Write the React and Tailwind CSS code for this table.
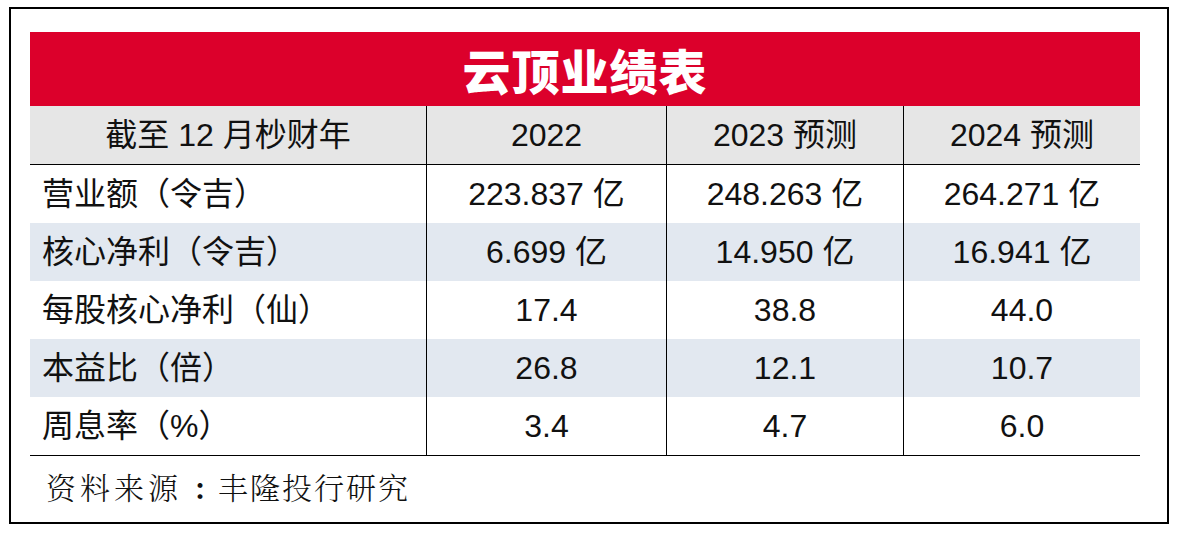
import React from "react";

const rows = [
  ["营业额（令吉）", "223.837 亿", "248.263 亿", "264.271 亿"],
  ["核心净利（令吉）", "6.699 亿", "14.950 亿", "16.941 亿"],
  ["每股核心净利（仙）", "17.4", "38.8", "44.0"],
  ["本益比（倍）", "26.8", "12.1", "10.7"],
  ["周息率（%）", "3.4", "4.7", "6.0"],
];

const font = { fontFamily: '"Liberation Sans", "Noto Sans CJK SC", sans-serif' };

export default function App() {
  return (
    <div className="w-[1178px] h-[535px] bg-white pt-[7px] pl-[9px]" style={font}>
      <div className="w-[1160px] h-[517px] border-2 border-black pl-[19px] pt-[23px] flex flex-col">
        <div className="w-[1110px] flex flex-col">
          <div className="h-[74px] bg-[#dc002b] flex items-center justify-center">
            <span
              className="text-white text-[48px] font-black tracking-[1px] leading-none"
              style={{ fontFamily: '"Noto Sans CJK SC", sans-serif' }}
            >
              云顶业绩表
            </span>
          </div>
          <div className="grid grid-cols-[396px_240px_237px_237px] h-[59px] bg-[#e6e6e6] border-b border-black text-[32px] text-[#111]">
            <div className="flex items-center justify-center">截至 12 月杪财年</div>
            <div className="flex items-center justify-center border-l border-black">2022</div>
            <div className="flex items-center justify-center border-l border-black">2023 预测</div>
            <div className="flex items-center justify-center border-l border-black">2024 预测</div>
          </div>
          {rows.map((r, i) => (
            <div
              key={i}
              className={`grid grid-cols-[396px_240px_237px_237px] h-[58px] text-[32px] text-[#111] ${
                i % 2 === 1 ? "bg-[#e2e8f0]" : "bg-white"
              }`}
            >
              <div className="flex items-center pl-[12px]">{r[0]}</div>
              <div className="flex items-center justify-center border-l border-black">{r[1]}</div>
              <div className="flex items-center justify-center border-l border-black">{r[2]}</div>
              <div className="flex items-center justify-center border-l border-black">{r[3]}</div>
            </div>
          ))}
          <div className="border-t border-black h-[65px] flex items-center pl-[16px] pb-[4px]">
            <span
              className="flex items-center text-[30px] font-light text-[#111]"
              style={{ fontFamily: '"Noto Serif CJK SC", "Noto Sans CJK SC", serif' }}
            >
              <span className="tracking-[4px]">资料来源</span>
              <span className="w-[36px] text-center font-bold">:</span>
              <span className="tracking-[2px]">丰隆投行研究</span>
            </span>
          </div>
        </div>
      </div>
    </div>
  );
}
